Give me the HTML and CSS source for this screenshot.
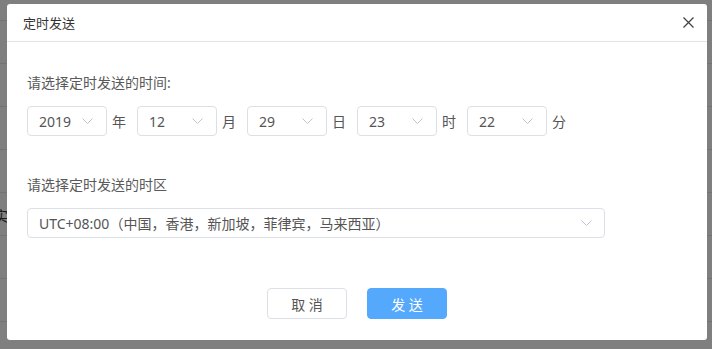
FILE: index.html
```html
<!DOCTYPE html>
<html lang="zh-CN">
<head>
    <meta charset="UTF-8">
    <meta name="viewport" content="width=device-width, initial-scale=1.0">
    <title>定时发送</title>
    <link rel="stylesheet" href="styles.css">
</head>
<body>
    <div class="page">
        <div class="page-row"></div>
        <div class="page-row"></div>
        <div class="page-row"></div>
        <div class="page-row"></div>
        <div class="page-row"><span class="page-cell">实</span></div>
        <div class="page-row"></div>
        <div class="page-row"></div>
        <div class="page-row"></div>
    </div>
    <div class="mask"></div>

    <div class="dialog">
        <div class="dialog-header">
            <span class="dialog-title">定时发送</span>
            <button class="dialog-close" type="button">
                <svg width="11" height="11" viewBox="0 0 11 11">
                    <path d="M0.5 0.5 L10.5 10.5 M10.5 0.5 L0.5 10.5" stroke="#444" stroke-width="1.3" fill="none"/>
                </svg>
            </button>
        </div>
        <div class="dialog-body">
            <div class="field-label">请选择定时发送的时间:</div>
            <div class="time-row">
                <div class="select select-small">
                    <span>2019</span>
                    <svg class="arrow" width="11" height="6" viewBox="0 0 11 6"><path d="M0.5 0.5 L5.5 5.5 L10.5 0.5" stroke="#c0c4cc" fill="none"/></svg>
                </div>
                <span class="unit">年</span>
                <div class="select select-small">
                    <span>12</span>
                    <svg class="arrow" width="11" height="6" viewBox="0 0 11 6"><path d="M0.5 0.5 L5.5 5.5 L10.5 0.5" stroke="#c0c4cc" fill="none"/></svg>
                </div>
                <span class="unit">月</span>
                <div class="select select-small">
                    <span>29</span>
                    <svg class="arrow" width="11" height="6" viewBox="0 0 11 6"><path d="M0.5 0.5 L5.5 5.5 L10.5 0.5" stroke="#c0c4cc" fill="none"/></svg>
                </div>
                <span class="unit">日</span>
                <div class="select select-small">
                    <span>23</span>
                    <svg class="arrow" width="11" height="6" viewBox="0 0 11 6"><path d="M0.5 0.5 L5.5 5.5 L10.5 0.5" stroke="#c0c4cc" fill="none"/></svg>
                </div>
                <span class="unit">时</span>
                <div class="select select-small">
                    <span>22</span>
                    <svg class="arrow" width="11" height="6" viewBox="0 0 11 6"><path d="M0.5 0.5 L5.5 5.5 L10.5 0.5" stroke="#c0c4cc" fill="none"/></svg>
                </div>
                <span class="unit">分</span>
            </div>

            <div class="field-label zone-label">请选择定时发送的时区</div>
            <div class="select select-wide">
                <span>UTC+08:00（中国，香港，新加坡，菲律宾，马来西亚）</span>
                <svg class="arrow" width="11" height="6" viewBox="0 0 11 6"><path d="M0.5 0.5 L5.5 5.5 L10.5 0.5" stroke="#c0c4cc" fill="none"/></svg>
            </div>
        </div>
        <div class="dialog-footer">
            <button class="btn" type="button">取 消</button>
            <button class="btn btn-primary" type="button">发 送</button>
        </div>
    </div>
</body>
</html>
```

FILE: styles.css
```css
body {
    margin: 0;
    width: 712px;
    height: 349px;
    overflow: hidden;
    font-family: "Noto Sans", "Noto Sans CJK SC", sans-serif;
    background-color: #fff;
}

.page {
    padding-top: 20px;
    border-left: 94px solid transparent;
    box-sizing: border-box;
    height: 349px;
}

.page-row {
    height: 42px;
    border-top: 1px solid #e6e6e6;
    position: relative;
    left: -94px;
    width: 712px;
}

.page-cell {
    display: inline-block;
    margin-left: -6px;
    margin-top: 12px;
    font-size: 14px;
    color: #333;
}

.mask {
    position: fixed;
    top: 0;
    left: 0;
    right: 0;
    bottom: 0;
    background-color: rgba(0, 0, 0, 0.5);
}

.dialog {
    position: absolute;
    left: 7px;
    top: 4px;
    width: 700px;
    height: 336px;
    background-color: #fff;
    border-radius: 3px;
    box-sizing: border-box;
}

.dialog-header {
    height: 37px;
    border-bottom: 1px solid #e4e4e4;
    display: flex;
    align-items: center;
    justify-content: space-between;
    padding: 0 13px 0 16px;
}

.dialog-title {
    font-size: 13px;
    color: #333;
}

.dialog-close {
    border: none;
    background: none;
    padding: 0;
    width: 11px;
    height: 11px;
    display: flex;
    cursor: pointer;
}

.dialog-body {
    padding: 31px 20px 0 20px;
}

.field-label {
    font-size: 14px;
    line-height: 20px;
    color: #5a5a5a;
}

.zone-label {
    margin-top: 39px;
}

.time-row {
    display: flex;
    align-items: center;
    margin-top: 13px;
}

.select {
    height: 30px;
    box-sizing: border-box;
    border: 1px solid #dcdfe6;
    border-radius: 4px;
    display: flex;
    align-items: center;
    justify-content: space-between;
    padding: 0 13px 0 11px;
    font-size: 14px;
    color: #555;
}

.select-small {
    width: 80px;
}

.select-wide {
    width: 578px;
    margin-top: 13px;
    padding-right: 12px;
}

.arrow {
    flex-shrink: 0;
}

.unit {
    font-size: 14px;
    color: #555;
    margin: 0 11px 0 5px;
}

.dialog-footer {
    display: flex;
    justify-content: center;
    gap: 20px;
    padding-top: 50px;
}

.btn {
    width: 80px;
    height: 31px;
    border: 1px solid #dcdfe6;
    border-radius: 4px;
    background-color: #fff;
    color: #555;
    font-family: "Noto Sans", "Noto Sans CJK SC", sans-serif;
    font-size: 14px;
    cursor: pointer;
}

.btn-primary {
    background-color: #55a9fd;
    border-color: #55a9fd;
    color: #fff;
}
```
